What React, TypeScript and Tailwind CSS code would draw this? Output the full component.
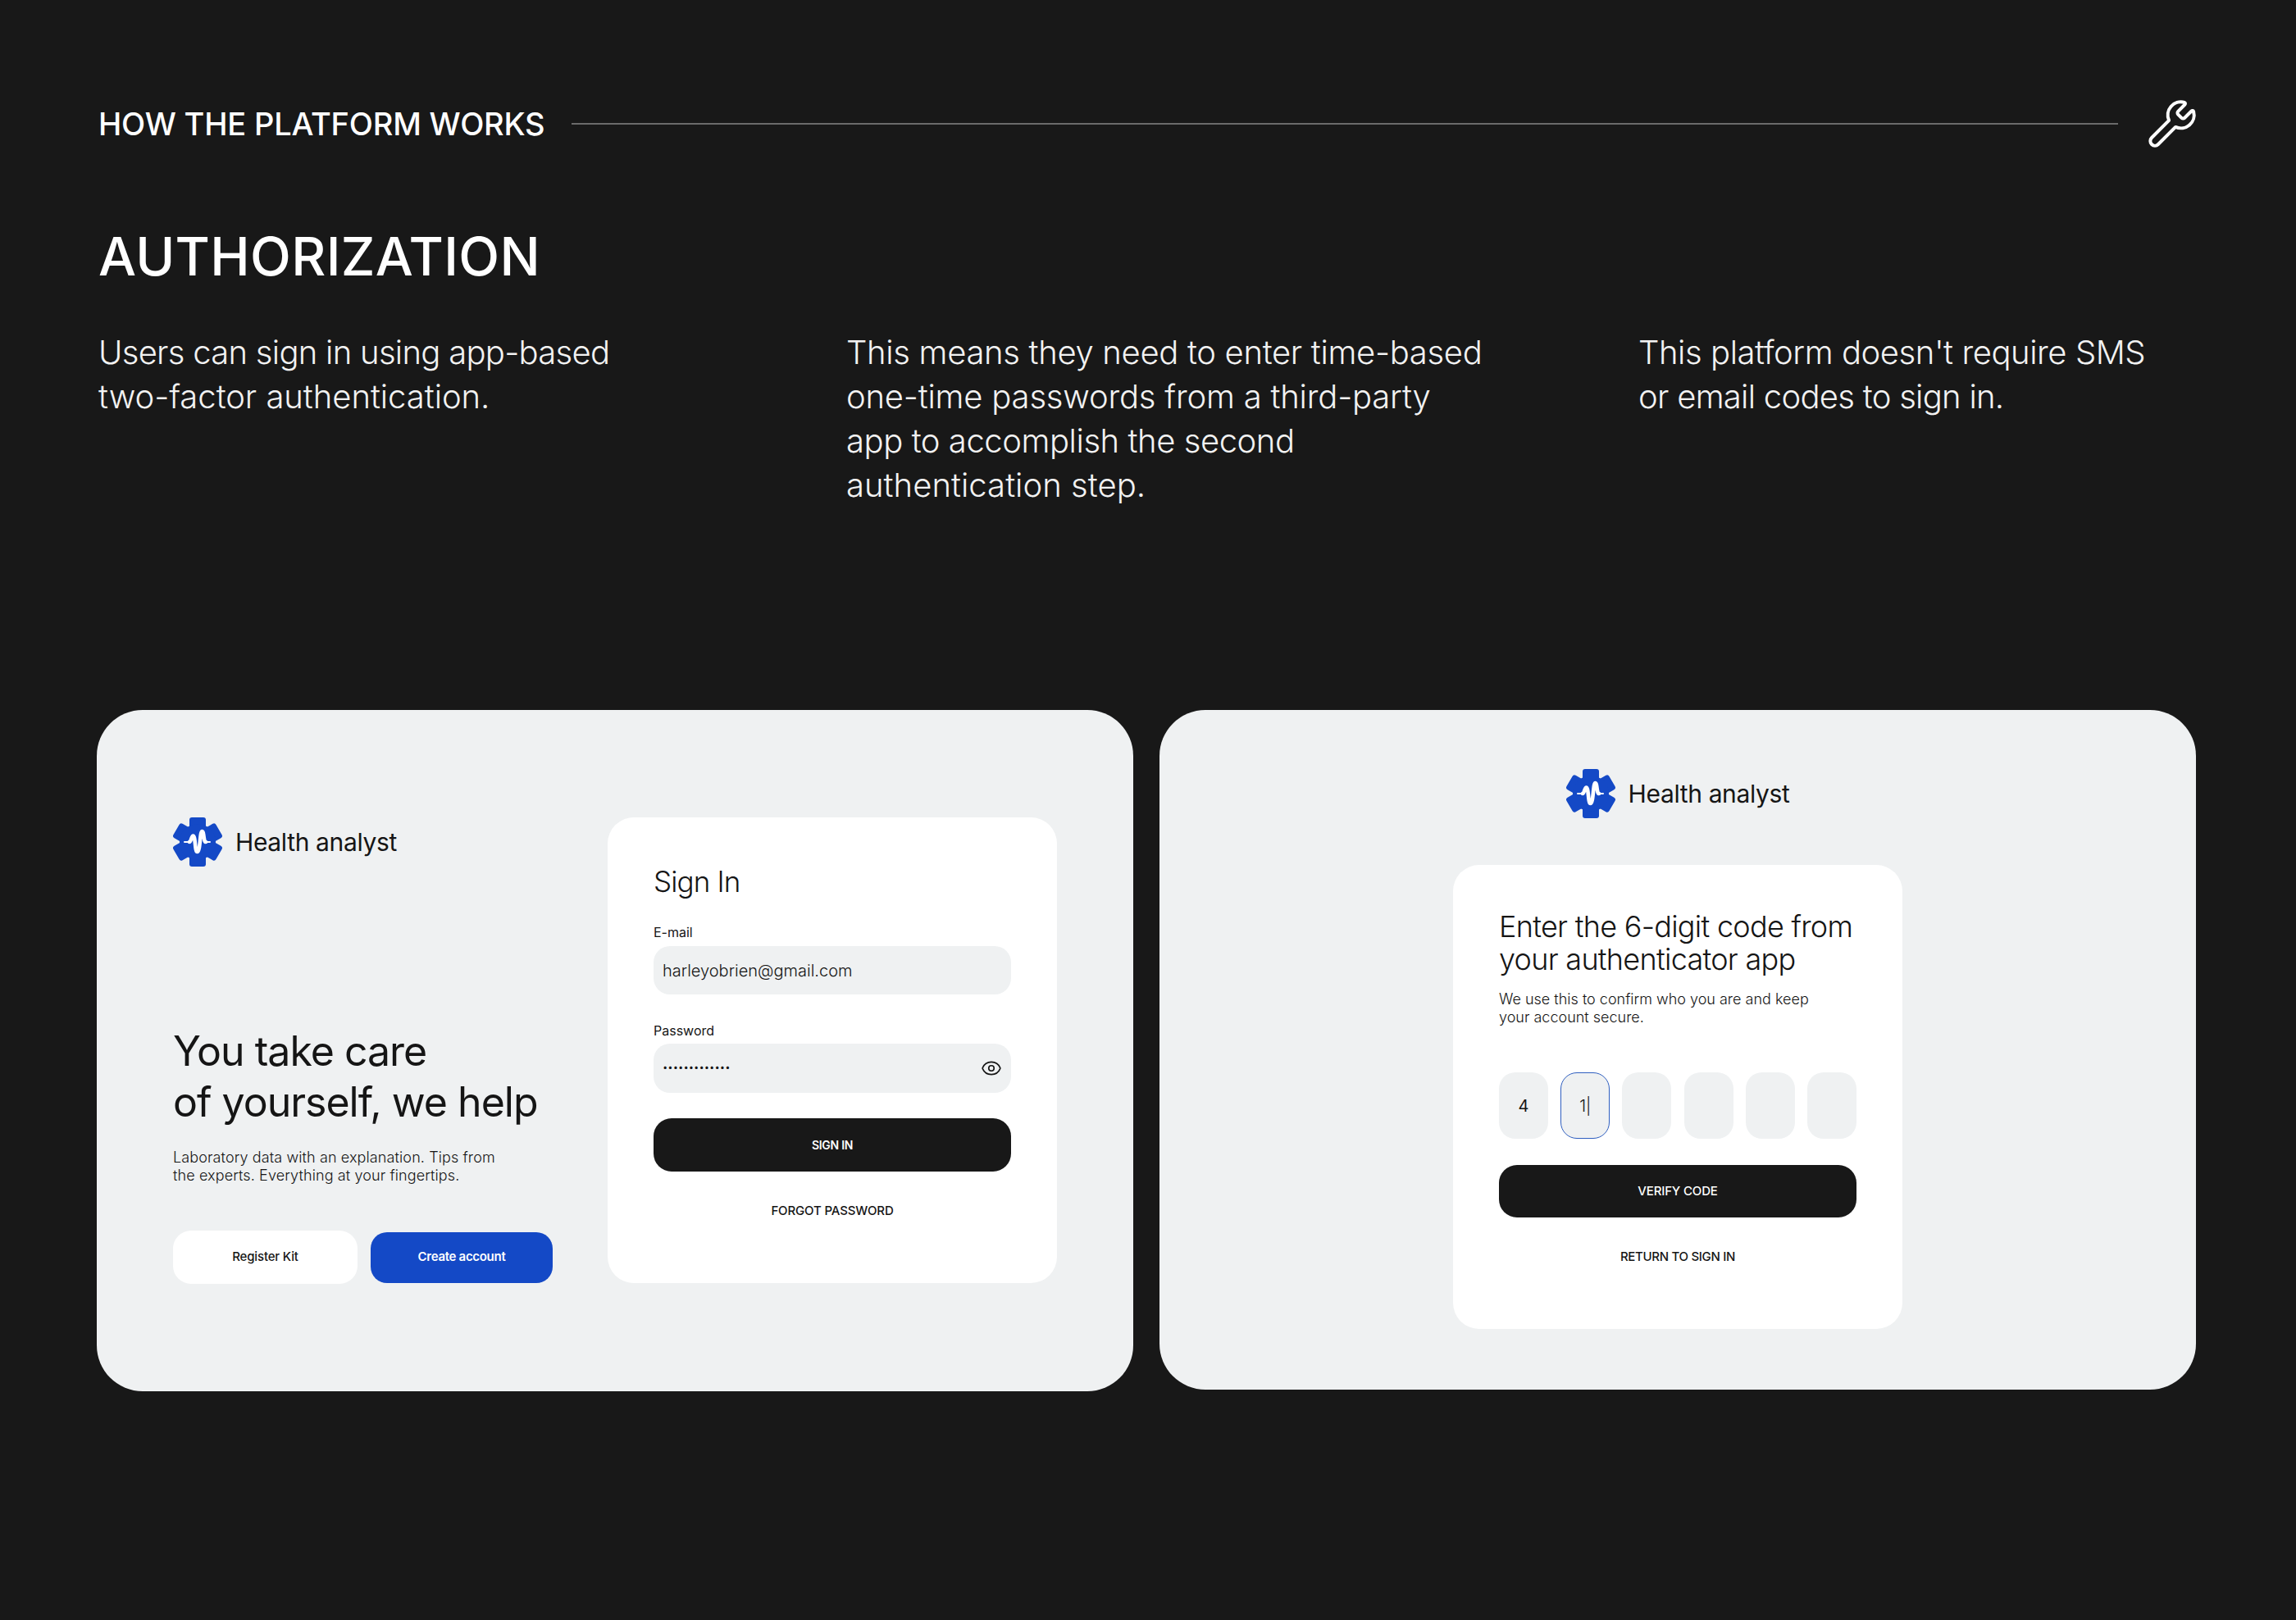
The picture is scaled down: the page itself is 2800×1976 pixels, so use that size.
import { Wrench, Eye } from "lucide-react";

function Logo() {
  return (
    <svg width="60" height="60" viewBox="0 0 60 60" className="shrink-0">
      <g fill="#1449c6">
        <rect x="20" y="0" width="20" height="60" rx="3" />
        <rect x="20" y="0" width="20" height="60" rx="3" transform="rotate(60 30 30)" />
        <rect x="20" y="0" width="20" height="60" rx="3" transform="rotate(120 30 30)" />
        <circle cx="30" cy="30" r="22" />
      </g>
      <path d="M14 30 H21 M39 30 H45" fill="none" stroke="#fff" strokeWidth="2" strokeLinecap="round" />
      <path
        d="M20 30 C22 30 22.5 22.5 24.5 22.5 C27.5 22.5 26.5 42 29.5 42 C33.5 42 32.5 17 35.5 17 C38 17 37 30 40 30"
        fill="none"
        stroke="#fff"
        strokeWidth="4.6"
        strokeLinecap="round"
        strokeLinejoin="round"
      />
    </svg>
  );
}

function Brand() {
  return (
    <div className="flex items-center gap-[16px]">
      <Logo />
      <span className="text-[30px] leading-[40px] font-normal tracking-[-0.012em] text-[#151515]">Health analyst</span>
    </div>
  );
}

export default function App() {
  return (
    <div className="w-[2800px] h-[1976px] bg-[#181818] overflow-hidden pt-[131px] text-white [font-family:Inter,sans-serif]">
      <div className="ml-[120px] mr-[122px] h-[40px] flex items-center">
        <span className="text-[38px] leading-[40px] font-medium tracking-[-0.005em] whitespace-nowrap">HOW THE PLATFORM WORKS</span>
        <div className="ml-[33px] flex-1 h-[2px] bg-[#6a6a6a]" />
        <Wrench size={64} strokeWidth={1.5} className="ml-[34px] -mr-[3px] text-white" />
      </div>

      <h1 className="ml-[120px] mt-[107px] text-[65px] leading-[70px] font-medium tracking-[0.005em]">AUTHORIZATION</h1>

      <div className="ml-[120px] mt-[55px] flex text-[40px] leading-[54px] font-light text-[#f2f2f2]">
        <p className="w-[912px]">
          <span className="block tracking-[-0.018em]">Users can sign in using app-based</span>
          <span className="block tracking-[-0.001em]">two-factor authentication.</span>
        </p>
        <p className="w-[966px]">
          <span className="block tracking-[-0.008em]">This means they need to enter time-based</span>
          <span className="block tracking-[-0.005em]">one-time passwords from a third-party</span>
          <span className="block tracking-[-0.011em]">app to accomplish the second</span>
          <span className="block tracking-[0.001em]">authentication step.</span>
        </p>
        <p>
          <span className="block tracking-[-0.011em]">This platform doesn't require SMS</span>
          <span className="block tracking-[-0.018em]">or email codes to sign in.</span>
        </p>
      </div>

      <div className="ml-[118px] mt-[247px] flex items-start gap-[32px] text-[#151515]">
        <div className="w-[1264px] h-[831px] rounded-[56px] bg-[#eff1f2] px-[93px] py-[131px] flex justify-between">
          <div className="w-[463px] flex flex-col justify-between">
            <Brand />
            <div>
              <h2 className="text-[50px] leading-[62px] font-normal tracking-[-0.02em]">You take care<br />of yourself, we help</h2>
              <p className="mt-[26px] text-[18px] leading-[22px] font-light tracking-[0.006em]">Laboratory data with an explanation. Tips from<br />the experts. Everything at your fingertips.</p>
              <div className="mt-[56px] flex items-center gap-[16px]">
                <button className="w-[225px] h-[65px] rounded-[22px] bg-white text-[15px] font-medium tracking-[-0.01em]">Register Kit</button>
                <button className="w-[222px] h-[62px] rounded-[20px] bg-[#1449c6] text-white text-[15px] font-semibold tracking-[-0.02em]">Create account</button>
              </div>
            </div>
          </div>

          <div className="w-[548px] h-[568px] rounded-[32px] bg-white px-[56px] pt-[58px]">
            <h3 className="text-[35px] leading-[40px] font-light tracking-[-0.025em]">Sign In</h3>
            <div className="mt-[32px] text-[16px] leading-[20px]">E-mail</div>
            <div className="mt-[7px] h-[59px] rounded-[20px] bg-[#eff1f2] px-[11px] flex items-center text-[20px] font-light">harleyobrien@gmail.com</div>
            <div className="mt-[34px] text-[16px] leading-[20px]">Password</div>
            <div className="mt-[6px] h-[60px] rounded-[20px] bg-[#eff1f2] pl-[11px] pr-[11px] flex items-center justify-between">
              <span className="text-[19px] leading-[20px] font-bold -translate-y-[5px]">.............</span>
              <Eye size={26} strokeWidth={1.5} />
            </div>
            <button className="mt-[31px] w-full h-[65px] rounded-[22px] bg-[#181818] text-white text-[14px] font-semibold tracking-[-0.02em]">SIGN IN</button>
            <div className="mt-[38px] text-center text-[15px] leading-[20px] font-medium tracking-[-0.01em]">FORGOT PASSWORD</div>
          </div>
        </div>

        <div className="w-[1264px] h-[829px] rounded-[56px] bg-[#eff1f2] pt-[72px] flex flex-col items-center">
          <Brand />
          <div className="mt-[57px] w-[548px] h-[566px] rounded-[32px] bg-white px-[56px] pt-[55px]">
            <h3 className="text-[36px] leading-[40px] font-light tracking-[-0.02em] whitespace-nowrap">Enter the 6-digit code from<br />your authenticator app</h3>
            <p className="mt-[18px] text-[18px] leading-[22px] font-light">We use this to confirm who you are and keep<br />your account secure.</p>
            <div className="mt-[56px] flex justify-between">
              <div className="w-[60px] h-[81px] rounded-[20px] bg-[#eff1f2] flex items-center justify-center text-[20px]">4</div>
              <div className="w-[60px] h-[81px] rounded-[20px] bg-[#eff1f2] border border-[#2f5fc0] flex items-center justify-center text-[20px] font-light">1|</div>
              <div className="w-[60px] h-[81px] rounded-[20px] bg-[#eff1f2]" />
              <div className="w-[60px] h-[81px] rounded-[20px] bg-[#eff1f2]" />
              <div className="w-[60px] h-[81px] rounded-[20px] bg-[#eff1f2]" />
              <div className="w-[60px] h-[81px] rounded-[20px] bg-[#eff1f2]" />
            </div>
            <button className="mt-[32px] w-full h-[64px] rounded-[22px] bg-[#181818] text-white text-[15px] font-medium tracking-[-0.01em]">VERIFY CODE</button>
            <div className="mt-[38px] text-center text-[15px] leading-[20px] font-medium tracking-[-0.02em]">RETURN TO SIGN IN</div>
          </div>
        </div>
      </div>
    </div>
  );
}
